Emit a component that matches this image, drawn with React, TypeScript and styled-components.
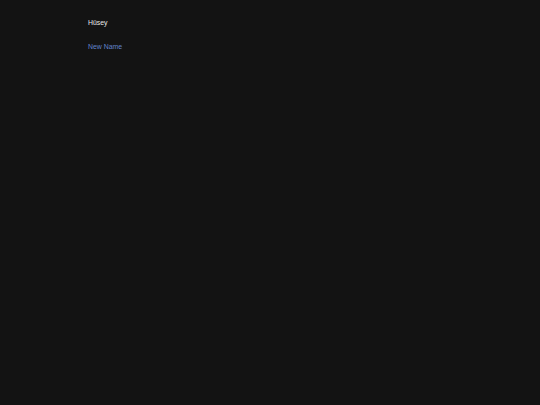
import React from "react";
import styled, { createGlobalStyle } from "styled-components";

const Global = createGlobalStyle`
  html, body {
    margin: 0;
    padding: 0;
    background: #131313;
    height: 100%;
  }
  #root { min-height: 100vh; background: #131313; }
`;

const Page = styled.div`
  min-height: 405px;
  background: #131313;
  padding: 18px 0 0 88px;
  box-sizing: border-box;
  font-family: "Liberation Sans", Arial, sans-serif;
  display: flex;
  flex-direction: column;
  align-items: flex-start;
  gap: 14px;
`;

const Name = styled.div`
  color: #e8e8e8;
  font-size: 6.9px;
  line-height: 10px;
`;

const Link = styled.a`
  color: #6183cc;
  font-size: 6.9px;
  line-height: 10px;
  text-decoration: none;
  cursor: pointer;
`;

export default function App() {
  return (
    <>
      <Global />
      <Page>
        <Name>Hüsey</Name>
        <Link>New Name</Link>
      </Page>
    </>
  );
}
